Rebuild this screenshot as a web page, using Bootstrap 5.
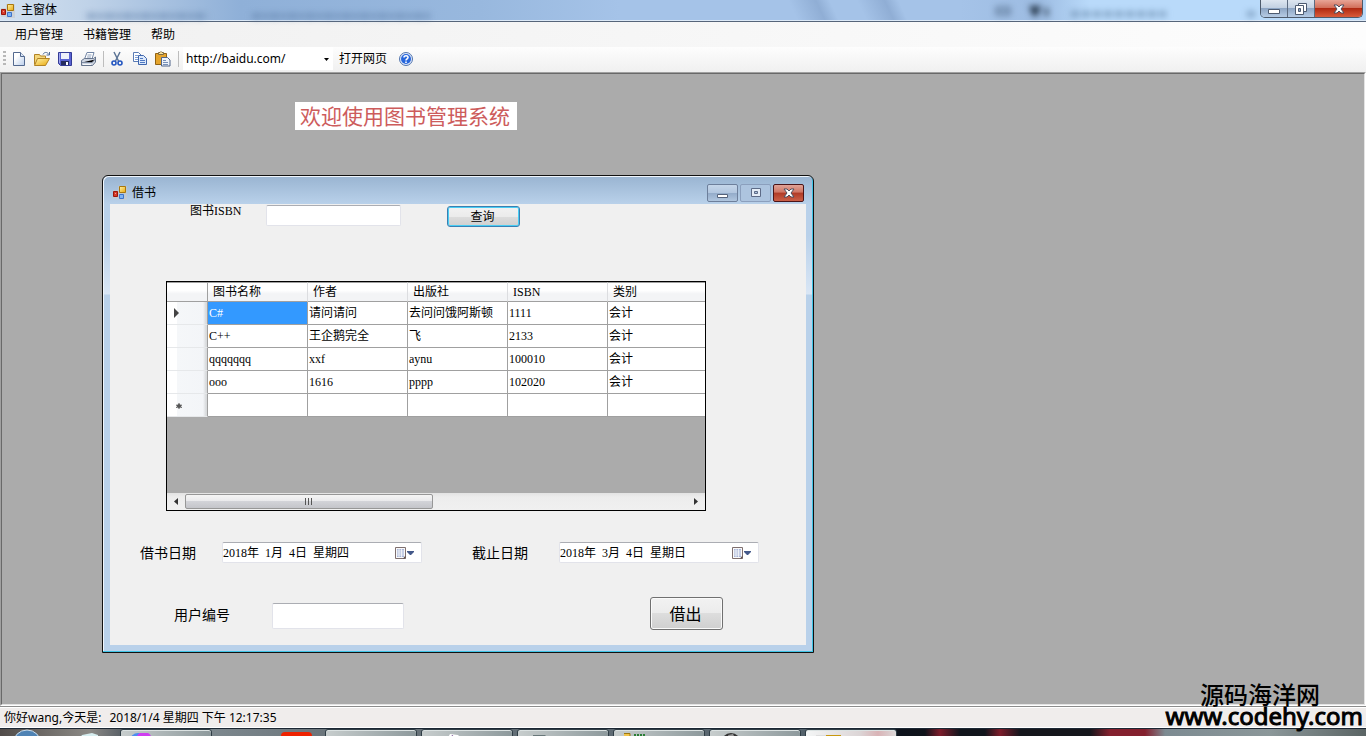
<!DOCTYPE html>
<html lang="zh-CN">
<head>
    <meta charset="UTF-8">
    <meta name="viewport" content="width=device-width, initial-scale=1.0">
    <title>主窗体</title>
    <link href="https://cdn.jsdelivr.net/npm/bootstrap@5.3.0/dist/css/bootstrap.min.css" rel="stylesheet">
    <style>
        body {
            font-family: "Noto Sans", "Noto Sans CJK SC", sans-serif;
            font-size: 12px;
            line-height: 16px;
            color: #000;
            background: #f0f0f0;
        }
        a { color: #000; text-decoration: none; }
        .song { font-family: "Liberation Serif", "Noto Sans CJK SC", serif; }

        /* main window title bar */
        .main-title {
            height: 22px;
            padding-left: 1px;
            background: linear-gradient(65deg, transparent 58%, rgba(130, 160, 200, .6) 60%, transparent 61%, transparent 63%, rgba(130, 160, 200, .6) 65%, transparent 66%),
                linear-gradient(90deg, #d3e1f0 0, #bfd2e8 90px, #8fb0d8 240px, #98b8de 480px, #a5c3e8 620px, #a5c3e8 960px, #9dbce2 1040px, #b9dafa 1090px, #b9dafa 100%);
            border-bottom: 1px solid #56657a;
            box-shadow: inset 0 -1px 0 #dce9f7;
        }
        .main-title span { padding: 2px 0 0 6px; }
        .ghost { filter: blur(3px); }
        .caption-group {
            height: 18px;
            margin-right: 3px;
            border: 1px solid #4d5a6b;
            border-top: 0;
            border-radius: 0 0 5px 5px;
        }
        .cap {
            padding: 0;
            border: 0;
            border-right: 1px solid #5c6b80;
            width: 27px;
            background: linear-gradient(#dde6f0 0, #c3d1e2 45%, #8ea6c4 50%, #b6cbe4 100%);
            display: flex;
            align-items: center;
            justify-content: center;
        }
        .cap.cap-close {
            width: 47px;
            border-right: 0;
            background: linear-gradient(#e8a596 0, #d2705b 45%, #b02a12 50%, #d95c3c 100%);
        }

        /* menu and tool bar */
        .menu-strip {
            height: 25px;
            padding-left: 5px;
            background: linear-gradient(90deg, #f0f0f0, #fdfdfd);
        }
        .menu-strip a { padding: 0 10px; }
        .tool-strip { height: 25px; padding-bottom: 2px; background: linear-gradient(#fdfdfd, #f0f0f0); }
        .tool-grip {
            width: 3px;
            height: 16px;
            margin: 0 1px 0 3px;
            background: repeating-linear-gradient(#b8b8b8 0, #b8b8b8 2px, transparent 2px, transparent 4px);
        }
        .tool-btn {
            width: 23px;
            height: 23px;
            padding: 0;
            border: 0;
            background: none;
            display: flex;
            align-items: center;
            justify-content: center;
        }
        .tool-help { margin-left: 7px; }
        .tool-sep { width: 1px; height: 16px; margin: 0 1px 0 4px; background: #bdbdbd; }
        .url-box { width: 150px; margin: 0 6px 0 3px; background: #fff; }
        .url-box select {
            width: 100%;
            height: 23px;
            padding: 0 0 0 3px;
            border: 0;
            appearance: none;
            background: #fff;
        }
        .url-box svg { position: absolute; right: 4px; top: 11px; pointer-events: none; }

        /* MDI area */
        .mdi-frame { border: 1px solid; border-color: #a0a0a0 #fff #fff #a0a0a0; }
        .mdi { border: 1px solid; border-color: #696969 #e3e3e3 #e3e3e3 #696969; background: #ababab; }
        .welcome {
            position: absolute;
            left: 293px;
            top: 28px;
            padding: 0 7px 0 5px;
            background: #fff;
            color: #cd5c5c;
            font-size: 21px;
            line-height: 28px;
        }
        .child-win {
            position: absolute;
            left: 100px;
            top: 101px;
            width: 712px;
            border: 1px solid #111;
            border-radius: 6px 6px 0 0;
            background: linear-gradient(#99b4d1 0, #b9d1ea 28px, #b9d1ea 60px, #d9e6f5 118px, #b9d1ea 119px);
            padding: 0 7px 7px 7px;
            box-shadow: inset -1px -1px 0 #3fc4e6, inset 1px 1px 0 #f0f6fc;
        }
        .child-title { height: 28px; padding: 5px 2px 0 3px; }
        .child-title span { margin-left: 5px; }
        .child-caps { gap: 2px; }
        .child-title .cap {
            width: 31px;
            height: 18px;
            border: 1px solid #6d7f9b;
            border-radius: 2px;
            background: linear-gradient(#c5d6ea 0, #b3c7df 48%, #93abc9 50%, #b0c6df 100%);
        }
        .child-title .cap.cap-off { border-color: #8b9fbd; background: #adc4df; }
        .child-title .cap.cap-close {
            border-color: #4a1418;
            background: linear-gradient(#e0a297 0, #cf7564 45%, #b03a26 50%, #cb5f47 100%);
        }
        .client { background: #f0f0f0; }

        .win-input {
            border: 1px solid #e2e3ea;
            border-top-color: #abadb3;
            border-radius: 2px;
            background: #fff;
            padding: 0 2px;
        }
        .win-btn {
            border: 1px solid #707070;
            border-radius: 3px;
            padding: 0 2px 0 0;
            color: #000;
            width: 73px;
            background: linear-gradient(#f2f2f2 0, #ebebeb 50%, #dddddd 50%, #cfcfcf 100%);
            box-shadow: inset 0 0 0 1px #fafafa;
        }
        .win-btn.is-default { border-color: #3c7fb1; box-shadow: inset 0 0 0 1px #48cdf4; }

        .isbn-row { padding: 1px 0 0 80px; }
        .isbn-row label { width: 76px; line-height: 13px; }
        .isbn-row input { width: 135px; height: 21px; }
        .isbn-row button { height: 21px; margin: 1px 0 0 46px; line-height: 18px; }

        /* book list */
        .book-view {
            width: 540px;
            margin: 54px 0 0 56px;
            border: 1px solid #000;
            background: #ababab;
        }
        .book-clip { height: 211px; overflow: hidden; }
        .book-view table { table-layout: fixed; width: 541px; border-collapse: separate; border-spacing: 0; }
        .book-view th, .book-view td {
            padding: 0 1px;
            height: 23px;
            border: solid #a0a0a0;
            border-width: 0 1px 1px 0;
            background: #fff;
            font-weight: 400;
            white-space: nowrap;
        }
        .book-view thead th {
            height: 20px;
            padding-left: 5px;
            border-top: 1px solid #a0a0a0;
            border-right-color: #dcdde0;
            background: linear-gradient(#fff 40%, #f3f4f6 60%);
        }
        .book-view thead th:first-child, .book-view tbody th { border-right-color: #a0a0a0; }
        .book-view tbody th {
            padding: 0 6px;
            border-bottom-color: #e6e8ea;
            background: linear-gradient(90deg, #fff 10px, #f5f7f9 10px, #f3f5f8 36px, #d8dadc 39px);
        }
        .book-view th svg { display: block; }
        .book-view td.picked { background: #3399ff; color: #fff; }
        .h-scroll {
            height: 17px;
            background: linear-gradient(#e3e3e3, #ededed 4px, #f0f0f0);
        }
        .h-scroll button { border: 0; padding: 0; width: 18px; background: none; display: flex; align-items: center; justify-content: center; }
        .h-thumb {
            width: 248px;
            height: 15px;
            border: 1px solid #979797;
            border-radius: 2px;
            background: linear-gradient(#f5f5f5 0, #e9e9eb 48%, #d2d3d8 50%, #c4c5ca 100%);
        }

        .date-row { padding: 31px 0 0 30px; font-size: 14px; }
        .date-row label { width: 82px; }
        .date-row label.second { width: 87px; margin-left: 50px; }
        .date-pick { width: 200px; height: 21px; font-size: 12px; padding: 0; }
        .date-pick input { border: 0; padding: 0; min-width: 0; background: none; line-height: 16px; }
        .date-pick button { border: 0; background: none; padding: 0 6px 0 0; display: flex; align-items: center; }
        .user-row { padding: 34px 83px 15px 64px; font-size: 14px; }
        .user-row label { width: 98px; padding-top: 2px; }
        .user-row input { width: 132px; height: 26px; margin-top: 4px; }
        .user-row button { height: 33px; font-size: 16px; }

        .status-strip {
            height: 22px;
            padding-left: 4px;
            border-top: 1px solid #8c8c8c;
            background: #f0edec;
            box-shadow: inset 0 1px 0 #fff, inset 0 -1px 0 #fff;
        }

        /* the strip of the desktop task bar that is still in view */
        .task-strip {
            height: 8px;
            overflow: hidden;
            border-top: 1px solid #1c2733;
            background: linear-gradient(90deg, #514c49 0, #8c8a86 90px, #5c6268 120px, #7c878d 215px, #6b757b 325px, #55636d 800px, #0d131c 900px, #0f131a 925px, #7c1c2a 940px, #11151c 960px, #11151c 985px, #7c1c2a 1000px, #15161c 1020px, #15161c 1090px, #84202e 1110px, #84202e 1145px, #7d8b92 1165px, #8b9799 1270px, #5a6464 100%);
        }
        .task-btn {
            width: 92px;
            height: 12px;
            border: 1px solid #2f3d45;
            border-radius: 3px;
            background: linear-gradient(90deg, #c7cdcd, #8d999c);
            box-shadow: inset 0 1px 0 #dbe2e2;
            padding: 3px 0 0 10px;
        }
        .task-btn.active { background: linear-gradient(90deg, #f4f6f6, #dcd5d6 60%, #d9b3b6 80%, #dcd9d9); }
        .task-btn svg { display: block; }
        .watermark {
            position: absolute;
            right: 3px;
            bottom: 8px;
            text-align: right;
            font-size: 24px;
            line-height: 24px;
            pointer-events: none;
        }
        .watermark div:first-child { padding-right: 43px; line-height: 19px; font-weight: 500; }
        .watermark div:last-child { -webkit-text-stroke: 1px #000; }
    </style>
</head>
<body>
<svg width="0" height="0" class="position-absolute">
    <defs>
        <linearGradient id="gold" x1="0" y1="0" x2="1" y2="1">
            <stop offset="0" stop-color="#fff3a8"/><stop offset="1" stop-color="#e9a70c"/>
        </linearGradient>
        <linearGradient id="paper" x1="0" y1="0" x2="1" y2="1">
            <stop offset="0.3" stop-color="#fff"/><stop offset="1" stop-color="#b9cdea"/>
        </linearGradient>
        <symbol id="form-icon" viewBox="0 0 14 14">
            <path fill="#c9c9c9" d="M0 4h5v9H0zM5 0h9v14H5z" opacity=".6"/>
            <path fill="url(#gold)" stroke="#a8770e" d="M6.500.5h6v6h-6z"/>
            <path fill="#d63a28" stroke="#9c1509" d="M.5 5.500h4v5h-4z"/>
            <path fill="#fff" opacity=".5" d="M2 7h1v1H2z"/>
            <path fill="#7db3f4" stroke="#3e73c9" d="M6.500 8.500h4v4h-4z"/>
        </symbol>
        <symbol id="x-icon" viewBox="0 0 12 10">
            <path d="M1 1h3l2 2 2-2h3L8 5l3 4H8L6 7 4 9H1l3-4z" fill="#fff" stroke="#4d4d5e" stroke-width="1"/>
        </symbol>
        <symbol id="cal-icon" viewBox="0 0 21 14">
            <path fill="#fafafa" stroke="#7e6f6f" d="M1.500 1.500h10v11h-10z"/>
            <path fill="#a9b5d8" d="M3 3h7v8H3z"/>
            <path stroke="#fff" stroke-width=".7" d="M3 5h7M3 7h7M3 9h7M5 3v8M7.500 3v8"/>
            <path fill="#5d5050" d="M9 12.500l2.500-3v3z"/>
            <path fill="#44598a" d="M13 5h7v1l-3 3h-1l-3-3z"/>
        </symbol>
    </defs>
</svg>

<div class="vh-100 d-flex flex-column overflow-hidden position-relative">
    <header class="main-title d-flex align-items-start flex-shrink-0">
        <svg class="mt-1" width="14" height="14"><use href="#form-icon"/></svg>
        <span>主窗体</span>
        <svg class="ghost flex-grow-1" height="20" width="100">
            <path stroke="#5e7fa8" stroke-width="6" stroke-dasharray="9 2 5 2" opacity=".55" d="M30 16h120M195 16h180"/>
            <path stroke="#2d4560" stroke-width="3" fill="none" d="M940 8h12v6h-12z" opacity=".5"/>
            <path fill="#10202f" d="M972 6h12l-4 10h-4zM988 8h3v8h-3z" opacity=".85"/>
            <path stroke="#5f80a4" stroke-width="6" stroke-dasharray="8 3" opacity=".6" d="M1014 14h95M1190 14h8"/>
        </svg>
        <div class="caption-group d-flex overflow-hidden">
            <button class="cap" type="button" aria-label="最小化">
                <svg width="12" height="12"><path fill="#fff" stroke="#4d5b70" d="M.5 6.500h11v4H.5z"/></svg>
            </button>
            <button class="cap" type="button" aria-label="还原">
                <svg width="12" height="12"><path fill="#fff" stroke="#4d5b70" d="M3.500.5h8v8h-8z"/><path fill="#fff" stroke="#4d5b70" d="M.5 2.500h8v9h-8z"/><path fill="#8ea6c4" stroke="#4d5b70" d="M3.500 5.500h2v3h-2z"/></svg>
            </button>
            <button class="cap cap-close" type="button" aria-label="关闭">
                <svg width="12" height="10"><use href="#x-icon"/></svg>
            </button>
        </div>
    </header>

    <nav class="menu-strip d-flex align-items-center flex-shrink-0">
        <a href="#">用户管理</a>
        <a href="#">书籍管理</a>
        <a href="#">帮助</a>
    </nav>

    <div class="tool-strip d-flex align-items-center flex-shrink-0" role="toolbar">
        <span class="tool-grip"></span>
        <button class="tool-btn" type="button" aria-label="新建">
            <svg width="16" height="16"><path fill="url(#paper)" stroke="#53698f" d="M2.500 1.500h7l4 4v9h-11z"/><path fill="#dbe6f6" stroke="#53698f" d="M9.500 1.500v4h4"/></svg>
        </button>
        <button class="tool-btn" type="button" aria-label="打开">
            <svg width="18" height="16"><path fill="#f4d67a" stroke="#b28324" d="M1.500 13.500v-10h5l1 1.500h5v3"/><path fill="url(#gold)" stroke="#b28324" d="M1.500 14.500l3-7h12l-4 7z"/><path fill="none" stroke="#506c96" d="M10 3.500c1-2.500 4-3 6 0M16.500 1v3h-3"/></svg>
        </button>
        <button class="tool-btn" type="button" aria-label="保存">
            <svg width="16" height="16"><path fill="#5a63d2" stroke="#343b95" d="M1.500 1.500h13v13h-11l-2-2z"/><path fill="#eef1fa" d="M4 2h8v6H4z"/><path fill="#262c5e" d="M4 10h8v4H4z"/><path fill="#fff" d="M9 11h2v3H9z"/><path fill="#9fa6f0" d="M2 2h1v10H2z"/></svg>
        </button>
        <button class="tool-btn" type="button" aria-label="打印">
            <svg width="16" height="16"><path fill="#fff" stroke="#7286a6" d="M4.500 8l2.500-6.500h7l-2 6.500"/><path stroke="#90a2bd" d="M7.500 4h4M7 6h4"/><path fill="#cfd6e2" stroke="#66758d" d="M1.500 9.500l3-2h9l2-1.500v5l-3 3.500h-11z"/><path stroke="#7f8ca2" d="M2 11.500h10l3-3"/><path fill="#f7f8fa" d="M3 13h8v1H3z"/></svg>
        </button>
        <span class="tool-sep"></span>
        <button class="tool-btn" type="button" aria-label="剪切">
            <svg width="16" height="16"><path fill="none" stroke="#5d7596" stroke-width="1.500" d="M5 1l4.500 9M11 1L6.500 10"/><circle cx="5" cy="12" r="2" fill="none" stroke="#2456c0" stroke-width="1.600"/><circle cx="11" cy="12" r="2" fill="none" stroke="#2456c0" stroke-width="1.600"/></svg>
        </button>
        <button class="tool-btn" type="button" aria-label="复制">
            <svg width="16" height="16"><path fill="#fff" stroke="#5a7bb5" d="M1.500 1.500h5l3 3v6h-8z"/><path stroke="#7f9fd4" d="M3 4.500h3M3 6.500h3M3 8.500h3"/><path fill="#dce9fb" stroke="#3f66ad" d="M6.500 4.500h5l3 3v6h-8z"/><path stroke="#4f78c2" d="M8 7.500h3M8 9.500h5M8 11.500h5"/></svg>
        </button>
        <button class="tool-btn" type="button" aria-label="粘贴">
            <svg width="17" height="16"><path fill="#e5a42c" stroke="#916313" d="M1.500 2.500h11v11h-11z"/><path fill="#fbe29b" stroke="#7c6a42" d="M4.500 3.500v-2h1.500l1-1 1 1h1.500v2z"/><path fill="#eef3fb" stroke="#50658a" d="M7.500 6.500h6l2.500 2.500v6h-8.500z"/><path stroke="#7890b8" d="M9 9.500h3M9 11.500h5M9 13.500h5"/></svg>
        </button>
        <span class="tool-sep"></span>
        <div class="url-box position-relative">
            <select aria-label="网址"><option>http://baidu.com/</option></select>
            <svg width="5" height="3"><path fill="#000" d="M0 0h5L2.500 3z"/></svg>
        </div>
        <a href="#">打开网页</a>
        <button class="tool-btn tool-help" type="button" aria-label="帮助">
            <svg width="16" height="16"><circle cx="8" cy="8" r="6.500" fill="#dfe9fb" stroke="#5375ad"/><circle cx="8" cy="8" r="5" fill="#2766dc"/><path fill="none" stroke="#fff" stroke-width="1.600" d="M6 6.500c0-2.500 4.200-2.300 4 0 0 1.300-2 1.400-2 3M8 10.500v1.500"/></svg>
        </button>
    </div>

    <div class="mdi-frame flex-grow-1 d-flex">
        <main class="mdi flex-grow-1 position-relative">
            <div class="welcome">欢迎使用图书管理系统</div>

            <section class="child-win">
                <div class="child-title d-flex align-items-center">
                    <svg width="14" height="14"><use href="#form-icon"/></svg>
                    <span class="me-auto">借书</span>
                    <div class="child-caps d-flex">
                        <button class="cap" type="button" aria-label="最小化">
                            <svg width="12" height="12"><path fill="#fff" stroke="#55627a" d="M.5 7.500h10v3H.5z"/></svg>
                        </button>
                        <button class="cap cap-off" type="button" aria-label="最大化">
                            <svg width="12" height="10"><path fill="#e4ecf6" stroke="#5d6b87" d="M1.500.5h9v8h-9z"/><path fill="#adc4df" stroke="#5d6b87" d="M4.500 3.500h3v2h-3z"/></svg>
                        </button>
                        <button class="cap cap-close" type="button" aria-label="关闭">
                            <svg width="12" height="10"><use href="#x-icon"/></svg>
                        </button>
                    </div>
                </div>

                <form class="client" onsubmit="return false">
                    <div class="isbn-row song d-flex">
                        <label for="isbn">图书ISBN</label>
                        <input class="win-input" id="isbn" type="text">
                        <button class="win-btn is-default" type="submit">查询</button>
                    </div>

                    <div class="book-view song">
                        <div class="book-clip">
                            <table>
                                <colgroup><col style="width: 41px"><col><col><col><col><col></colgroup>
                                <thead>
                                <tr><th></th><th>图书名称</th><th>作者</th><th>出版社</th><th>ISBN</th><th>类别</th></tr>
                                </thead>
                                <tbody>
                                <tr><th><svg width="6" height="10"><path fill="#444" d="M1 0l5 5-5 5z"/></svg></th><td class="picked">C#</td><td>请问请问</td><td>去问问饿阿斯顿</td><td>1111</td><td>会计</td></tr>
                                <tr><th></th><td>C++</td><td>王企鹅完全</td><td>飞</td><td>2133</td><td>会计</td></tr>
                                <tr><th></th><td>qqqqqqq</td><td>xxf</td><td>aynu</td><td>100010</td><td>会计</td></tr>
                                <tr><th></th><td>ooo</td><td>1616</td><td>pppp</td><td>102020</td><td>会计</td></tr>
                                <tr><th><svg width="10" height="8"><path stroke="#555" d="M6 2v6M3 4l6 2.500M9 4L3 6.500"/><circle cx="6" cy="5" r="2" fill="#555"/></svg></th><td></td><td></td><td></td><td></td><td></td></tr>
                                </tbody>
                            </table>
                        </div>
                        <div class="h-scroll d-flex align-items-center">
                            <button type="button" aria-label="向左"><svg width="4" height="7"><path fill="#333" d="M4 0v7L0 3.500z"/></svg></button>
                            <div class="h-thumb d-flex align-items-center justify-content-center">
                                <svg width="8" height="7"><path stroke="#555" d="M.5 0v7M3.500 0v7M6.500 0v7"/></svg>
                            </div>
                            <button class="ms-auto" type="button" aria-label="向右"><svg width="4" height="7"><path fill="#333" d="M0 0v7l4-3.500z"/></svg></button>
                        </div>
                    </div>

                    <div class="date-row d-flex align-items-center">
                        <label for="from">借书日期</label>
                        <div class="date-pick win-input song d-flex">
                            <input class="flex-grow-1" id="from" type="text" value="2018年  1月  4日  星期四">
                            <button type="button" aria-label="选择日期"><svg width="21" height="14"><use href="#cal-icon"/></svg></button>
                        </div>
                        <label class="second" for="until">截止日期</label>
                        <div class="date-pick win-input song d-flex">
                            <input class="flex-grow-1" id="until" type="text" value="2018年  3月  4日  星期日">
                            <button type="button" aria-label="选择日期"><svg width="21" height="14"><use href="#cal-icon"/></svg></button>
                        </div>
                    </div>

                    <div class="user-row d-flex align-items-center">
                        <label for="user">用户编号</label>
                        <input class="win-input" id="user" type="text">
                        <button class="win-btn ms-auto" type="button">借出</button>
                    </div>
                </form>
            </section>
        </main>
    </div>

    <footer class="status-strip d-flex align-items-center flex-shrink-0">
        <span>你好wang,今天是:</span>
        <span class="ms-2">2018/1/4 星期四 下午 12:17:35</span>
    </footer>

    <div class="task-strip d-flex flex-shrink-0" aria-hidden="true">
        <svg width="120" height="8"><circle cx="27" cy="15" r="14" fill="#4f83b4" stroke="#c9dcec"/><path fill="#d7eef0" d="M82 6l10-2 6 2v3H80z"/></svg>
        <div class="task-btn"><svg width="30" height="8"><circle cx="7" cy="8" r="8" fill="#4b8ff0"/><circle cx="13" cy="7" r="8" fill="#cf3df0"/></svg></div>
        <svg width="113" height="8"><rect x="69" y="3" width="31" height="12" rx="4" fill="#ee2200"/></svg>
        <div class="task-btn me-1"><svg width="30" height="8"><path fill="#c8ad72" d="M0 3h14v5H0z"/></svg></div>
        <div class="task-btn me-1"><svg width="40" height="8"><path fill="#fff" d="M14 8l4-7 8 1 6 6z"/><path fill="#5a2480" d="M18 8l2-6 8 6z"/></svg></div>
        <div class="task-btn me-1"><svg width="30" height="8"><path fill="#69787a" d="M5 2h12l3 3H5z"/></svg></div>
        <div class="task-btn me-1"><svg width="40" height="8"><path fill="#f2c448" stroke="#9b7712" d="M-2 .5h8v8h-8z"/><path stroke="#2a7f35" stroke-width="2" stroke-dasharray="2 1" d="M10 2h12"/></svg></div>
        <div class="task-btn me-1"><svg width="30" height="8"><circle cx="11" cy="10" r="10" fill="#333"/><path fill="#999" d="M8 2l5-1 2 4H9z"/></svg></div>
        <div class="task-btn active"><svg width="40" height="8"><path fill="#ddd" d="M0 2h10v6H0z"/><path fill="#c8980e" d="M10 2h15v6H10z"/></svg></div>
    </div>

    <div class="watermark">
        <div>源码海洋网</div>
        <div>www.codehy.com</div>
    </div>
</div>

<script src="https://cdn.jsdelivr.net/npm/bootstrap@5.3.0/dist/js/bootstrap.bundle.min.js"></script>
</body>
</html>
